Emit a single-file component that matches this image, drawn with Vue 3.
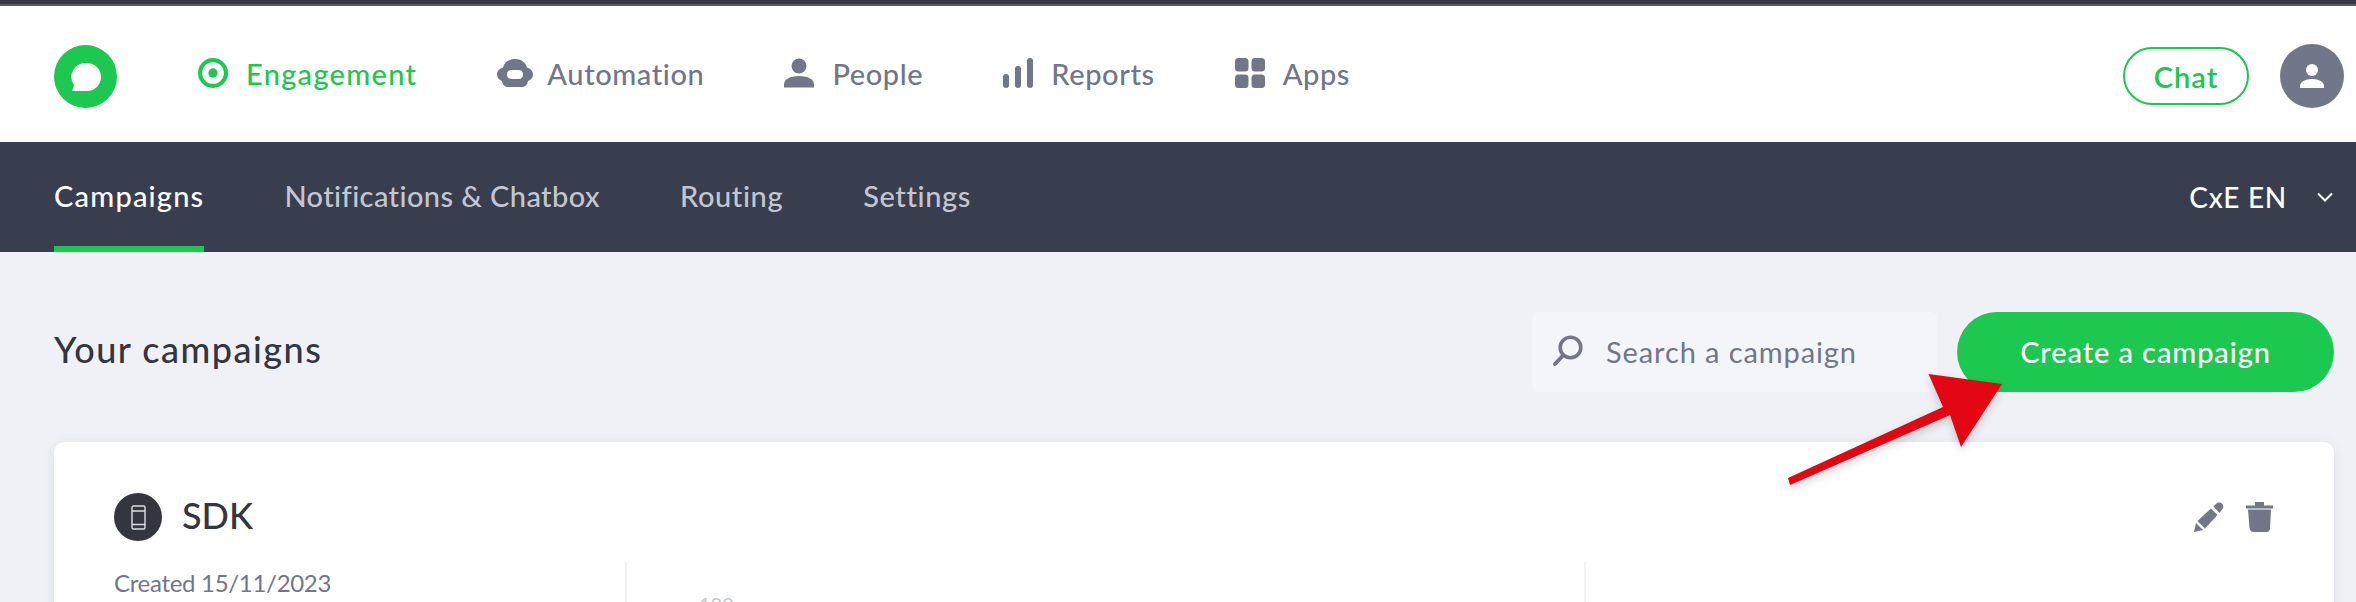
<script setup>
const mainNav = [
  { label: 'Automation', icon: 'bot' },
  { label: 'People', icon: 'person' },
  { label: 'Reports', icon: 'bars' },
  { label: 'Apps', icon: 'grid' }
]
const subNav = ['Notifications & Chatbox', 'Routing', 'Settings']
</script>

<template>
  <div class="page">
    <div class="topline"></div>

    <header class="header">
      <svg class="logo" viewBox="0 0 63 63">
        <circle cx="31.5" cy="31.5" r="31.5" fill="#1cc850" />
        <path d="M33 18a14 14 0 0 1 0 28H18l2-6a14 14 0 0 1 13-22z" fill="#fff" />
      </svg>

      <nav class="main_nav">
        <a class="main_link active">
          <svg class="ico_target" viewBox="0 0 29 29">
            <circle cx="14.500" cy="14.500" r="12.500" fill="none" stroke="#1cc850" stroke-width="4" />
            <circle cx="14.500" cy="14.500" r="4.500" fill="#1cc850" />
          </svg>
          Engagement
        </a>
        <a v-for="item in mainNav" :key="item.label" class="main_link">
          <svg v-if="item.icon === 'bot'" class="ico_bot" viewBox="0 0 36 28">
            <path
              fill-rule="evenodd"
              d="M18 0c6 0 10.500 3 12 8.500 3.500 1 6 3.500 6 7 0 3-2 5.500-5 6.500-.5 3.500-2.500 6-6 6H11c-3.500 0-5.500-2.500-6-6-3-1-5-3.500-5-6.500 0-3.500 2.500-6 6-7C7.500 3 12 0 18 0zM14.500 11C11.500 11 10 13 10 15.500S11.500 20 14.500 20h7c3 0 4.500-2 4.500-4.500S24.500 11 21.500 11z"
              fill="#717689"
            />
          </svg>
          <svg v-else-if="item.icon === 'person'" class="ico_nav" viewBox="0 0 30 29">
            <circle cx="15" cy="7.500" r="7.500" fill="#717689" />
            <path d="M0 29v-3c0-5 6-8.500 15-8.500S30 21 30 26v3z" fill="#717689" />
          </svg>
          <svg v-else-if="item.icon === 'bars'" class="ico_nav" viewBox="0 0 30 30">
            <rect x="0" y="16" width="6" height="14" rx="3" fill="#717689" />
            <rect x="12" y="8" width="6" height="22" rx="3" fill="#717689" />
            <rect x="24" y="0" width="6" height="30" rx="3" fill="#717689" />
          </svg>
          <svg v-else class="ico_nav" viewBox="0 0 30 30">
            <rect x="0" y="0" width="13.500" height="13.500" rx="3.500" fill="#717689" />
            <rect x="16.500" y="0" width="13.500" height="13.500" rx="3.500" fill="#717689" />
            <rect x="0" y="16.500" width="13.500" height="13.500" rx="3.500" fill="#717689" />
            <rect x="16.500" y="16.500" width="13.500" height="13.500" rx="3.500" fill="#717689" />
          </svg>
          {{ item.label }}
        </a>
      </nav>

      <div class="header_right">
        <button class="chat_btn">Chat</button>
        <div class="avatar">
          <svg viewBox="0 0 24 24" width="24" height="24">
            <circle cx="12" cy="6" r="6" fill="#fff" />
            <path d="M0 24v-2c0-4 5-7 12-7s12 3 12 7v2z" fill="#fff" />
          </svg>
        </div>
      </div>
    </header>

    <div class="sub_nav">
      <a class="sub_link current">Campaigns</a>
      <a v-for="label in subNav" :key="label" class="sub_link">{{ label }}</a>
      <div class="lang">
        <span class="lang_name">CxE EN</span>
        <svg viewBox="0 0 16 10" width="16" height="10">
          <path d="M1 1.500l7 7 7-7" fill="none" stroke="#fff" stroke-width="2" />
        </svg>
      </div>
    </div>

    <main class="content">
      <div class="toolbar">
        <h1 class="title">Your campaigns</h1>
        <div class="search">
          <svg viewBox="0 0 31 32" width="31" height="32">
            <circle cx="18.500" cy="12.500" r="10.300" fill="none" stroke="#717689" stroke-width="3.600" />
            <path d="M11 20.500L3 29" stroke="#717689" stroke-width="4" stroke-linecap="round" />
          </svg>
          <span>Search a campaign</span>
        </div>
        <button class="create_btn">Create a campaign</button>
      </div>

      <section class="card">
        <div class="card_head">
          <div class="badge">
            <svg viewBox="0 0 15 25" width="15" height="25">
              <rect x="1" y="1" width="13" height="23" rx="1.500" fill="none" stroke="#dcdee2" stroke-width="1.400" />
              <path d="M1 6h13M1 19.500h13" stroke="#dcdee2" stroke-width="1.400" />
            </svg>
          </div>
          <h2 class="card_name">SDK</h2>
          <div class="card_actions">
            <svg viewBox="0 0 30 30" width="30" height="30">
              <path d="M19.500 4.500l2.500-2.500c2-2 4.500-2 6 -.5s2 4 0 6L25.500 11z" fill="#717689" />
              <path d="M3.500 19L17 6.500 23.500 13 11 26.500z" fill="#717689" />
              <path d="M0 30l2-9 7 7z" fill="#717689" />
            </svg>
            <svg viewBox="0 0 27 30" width="27" height="30">
              <path d="M9 0h9v3.500h9v3H0v-3h9z" fill="#717689" />
              <path d="M2 7.500h23l-1 18.500c0 2.500-1.500 4-3.500 4h-13C5.500 30 4 28.500 3.500 26z" fill="#717689" />
            </svg>
          </div>
        </div>
        <div class="card_body">
          <div class="card_info">Created 15/11/2023</div>
          <div class="card_chart"><span class="tick">100</span></div>
          <div class="card_side"></div>
        </div>
      </section>
    </main>

    <svg class="arrow" viewBox="0 0 240 130" width="240" height="130">
      <path
        d="M144.500 4L218 14 177 77 166 45 6 115 4 108 159 37z"
        fill="#e30613"
      />
    </svg>
  </div>
</template>

<style>
html,
body {
  margin: 0;
  background: #eff1f6;
}
</style>

<style scoped>
.page {
  position: relative;
  width: 2356px;
  height: 602px;
  overflow: hidden;
  background: #eff1f6;
  font-family: Lato, 'Liberation Sans', sans-serif;
  color: #33363f;
}

.topline {
  height: 6px;
  background: linear-gradient(#38393f 0 4px, #5c5d63 4px 6px);
}

.header {
  height: 136px;
  box-sizing: border-box;
  padding: 0 12px 0 54px;
  display: flex;
  align-items: center;
  background: #fff;
}

.logo {
  width: 63px;
  height: 63px;
  margin-top: 5px;
}

.main_nav {
  display: flex;
  align-items: center;
  gap: 80px;
  margin-left: 81px;
  margin-top: -2px;
}

.main_link {
  display: flex;
  align-items: center;
  gap: 18px;
  font-size: 29px;
  font-weight: 500;
  letter-spacing: 0.6px;
  color: #717689;
}

.main_link.active {
  color: #1cc850;
  letter-spacing: 1.3px;
}

.ico_target,
.ico_nav {
  width: 30px;
  height: 30px;
}

.ico_bot {
  width: 36px;
  height: 28px;
  margin-right: -4px;
}

.header_right {
  margin-left: auto;
  margin-top: 4px;
  display: flex;
  align-items: center;
  gap: 31px;
}

.chat_btn {
  width: 126px;
  height: 58px;
  box-sizing: border-box;
  border: 2px solid #1cc850;
  border-radius: 29px;
  background: #fff;
  color: #1cc850;
  font: 600 29px Lato, 'Liberation Sans', sans-serif;
  letter-spacing: 1px;
}

.avatar {
  width: 64px;
  height: 64px;
  border-radius: 50%;
  background: #717689;
  display: flex;
  align-items: center;
  justify-content: center;
}

.sub_nav {
  height: 110px;
  box-sizing: border-box;
  padding: 0 23px 0 54px;
  display: flex;
  align-items: stretch;
  gap: 80px;
  background: #393e4e;
}

.sub_link {
  display: flex;
  align-items: center;
  font-size: 29px;
  font-weight: 500;
  letter-spacing: 0.6px;
  color: #c3c6cf;
  border-bottom: 6px solid transparent;
  padding-top: 2px;
}

.sub_link:nth-child(2) {
  letter-spacing: 0.4px;
}

.sub_link.current {
  color: #fff;
  letter-spacing: 1.2px;
  border-bottom-color: #1cc850;
}

.lang {
  margin-left: auto;
  display: flex;
  align-items: center;
  gap: 30px;
  color: #fff;
}

.lang_name {
  font-size: 28px;
  font-weight: 500;
  letter-spacing: 0.7px;
}

.content {
  padding: 60px 22px 0 54px;
}

.toolbar {
  display: flex;
  align-items: center;
  height: 80px;
}

.title {
  margin: -7px auto 0 0;
  font-size: 36px;
  font-weight: 500;
  letter-spacing: 1.5px;
  color: #33363f;
}

.search {
  width: 405px;
  height: 80px;
  box-sizing: border-box;
  padding: 0 0 2px 20px;
  display: flex;
  align-items: center;
  gap: 23px;
  background: #f4f5fa;
  border-radius: 6px;
  font-size: 29px;
  letter-spacing: 0.9px;
  color: #717689;
}

.create_btn {
  margin-left: 20px;
  width: 377px;
  height: 80px;
  padding: 0 0 2px;
  border: 0;
  border-radius: 40px;
  background: #1cc850;
  color: #fff;
  font: 500 29px Lato, 'Liberation Sans', sans-serif;
  letter-spacing: 0.9px;
}

.card {
  margin-top: 50px;
  height: 300px;
  box-sizing: border-box;
  padding: 51px 40px 0 60px;
  background: #fff;
  border-radius: 10px;
  box-shadow: 0 2px 12px rgba(100, 105, 130, 0.12);
}

.card_head {
  display: flex;
  align-items: center;
  height: 48px;
}

.badge {
  width: 48px;
  height: 48px;
  border-radius: 50%;
  background: #33363f;
  display: flex;
  align-items: center;
  justify-content: center;
}

.card_name {
  margin: -5px 0 0 20px;
  font-size: 36px;
  font-weight: 500;
}

.card_actions {
  margin-left: auto;
  margin-right: 21px;
  display: flex;
  align-items: center;
  gap: 22px;
}

.card_body {
  margin-top: 21px;
  display: grid;
  grid-template-columns: 511px 961px 1fr;
  height: 100px;
}

.card_info {
  font-size: 24px;
  letter-spacing: -0.3px;
  color: #717689;
  padding-top: 6px;
}

.card_chart {
  border-left: 2px solid #f1f2f5;
  border-right: 2px solid #f1f2f5;
  padding: 30px 0 0 72px;
}

.tick {
  font-size: 20px;
  color: #c4c6cf;
}

.arrow {
  position: absolute;
  left: 1784px;
  top: 370px;
  filter: drop-shadow(0 4px 4px rgba(0, 0, 0, 0.18));
}
</style>
